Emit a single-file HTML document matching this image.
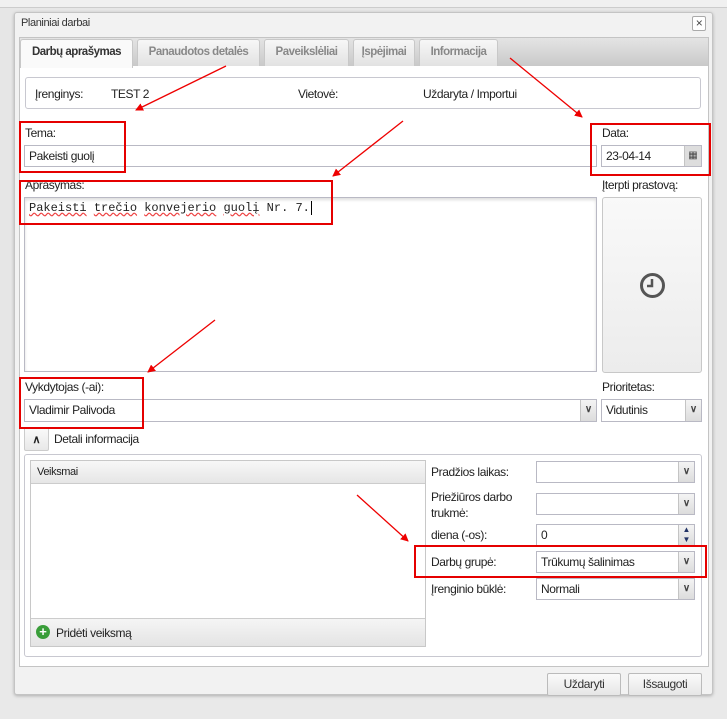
<!DOCTYPE html>
<html><head><meta charset="utf-8"><style>
*{box-sizing:border-box;margin:0;padding:0}
body{width:727px;height:719px;background:#e6e6e6;font-family:"Liberation Sans",sans-serif;font-size:12px;letter-spacing:-0.4px;color:#222;position:relative;overflow:hidden}
.a{position:absolute;white-space:nowrap}
.inp{position:absolute;background:#fff;border:1px solid #b9b9c4;height:22px;padding:3px 4px;font-size:12px;white-space:nowrap}
.dd{position:absolute;right:0;top:0;width:16px;height:100%;background:linear-gradient(#f4f4f4,#dcdcdc);border-left:1px solid #c4c4c4;font-size:10px;font-weight:bold;text-align:center;line-height:20px;color:#444;letter-spacing:0}
.rb{position:absolute;border:2px solid #e50000}
.tab{position:absolute;top:39px;height:27px;border:1px solid #c8c8c8;border-bottom:none;background:linear-gradient(#f7f7f7,#e2e2e2);color:#888;font-weight:bold;font-size:11.5px;letter-spacing:-0.5px;padding-top:6px;text-align:center;border-radius:3px 3px 0 0}
.btn{position:absolute;height:23px;border:1px solid #bbb;border-radius:2px;background:linear-gradient(#fafafa,#e6e6e6);text-align:center;line-height:21px;font-size:12px;color:#333}
</style></head><body>
<div class="a" style="left:0;top:0;width:727px;height:8px;background:#f0f0f0;border-bottom:1px solid #ccc"></div>
<div class="a" style="left:0;top:570px;width:727px;height:149px;background:#e9e9e9"></div>
<div class="a" style="left:14px;top:12px;width:699px;height:683px;background:#f2f2f2;border:1px solid #c4c4c4;border-radius:3px;box-shadow:0 1px 3px rgba(0,0,0,.25)"></div>
<div class="a" style="left:21px;top:17px;font-size:11px;color:#333">Planiniai darbai</div>
<div class="a" style="left:692px;top:16px;width:14px;height:15px;border:1px solid #aaa;border-radius:2px;background:#fff;font-size:12px;text-align:center;line-height:13px;color:#444">×</div>
<div class="a" style="left:19px;top:37px;width:690px;height:30px;background:linear-gradient(#e4e4e4,#c9c9c9);border:1px solid #c4c4c4"></div>
<div class="a" style="left:19px;top:66px;width:690px;height:601px;background:#fff;border:1px solid #c4c4c4;border-top:none"></div>
<div class="tab" style="left:20px;width:113px;background:#fafafa;color:#333;height:29px">Darbų aprašymas</div>
<div class="tab" style="left:137px;width:123px">Panaudotos detalės</div>
<div class="tab" style="left:264px;width:85px">Paveikslėliai</div>
<div class="tab" style="left:353px;width:62px">Įspėjimai</div>
<div class="tab" style="left:419px;width:79px">Informacija</div>
<div class="a" style="left:25px;top:77px;width:676px;height:32px;border:1px solid #c8c8d0;border-radius:3px"></div>
<div class="a" style="left:35px;top:87px">Įrenginys:</div>
<div class="a" style="left:111px;top:87px">TEST 2</div>
<div class="a" style="left:298px;top:87px">Vietovė:</div>
<div class="a" style="left:423px;top:87px">Uždaryta / Importui</div>
<div class="a" style="left:25px;top:126px">Tema:</div>
<div class="inp" style="left:24px;top:145px;width:573px">Pakeisti guolį</div>
<div class="a" style="left:602px;top:126px">Data:</div>
<div class="inp" style="left:601px;top:145px;width:101px">23-04-14<div class="dd" style="width:17px;background:#ddd;font-weight:normal">▦</div></div>
<div class="a" style="left:25px;top:178px">Aprašymas:</div>
<div class="inp" style="left:24px;top:197px;width:573px;height:175px;padding:3px 4px;font-family:'Liberation Mono',monospace;font-size:12px;letter-spacing:0;box-shadow:inset 0 2px 3px #ddd"><span style="text-decoration:underline wavy #e44">Pakeisti</span> <span style="text-decoration:underline wavy #e44">trečio</span> <span style="text-decoration:underline wavy #e44">konvejerio</span> <span style="text-decoration:underline wavy #e44">guolį</span> Nr. 7.<span style="border-left:1px solid #000;margin-left:1px"></span></div>
<div class="a" style="left:602px;top:178px">Įterpti prastovą:</div>
<div class="a" style="left:602px;top:197px;width:100px;height:176px;border:1px solid #c8c8c8;border-radius:3px;background:linear-gradient(#f9f9f9,#ececec)"></div>
<svg class="a" style="left:639px;top:272px" width="27" height="27"><circle cx="13.5" cy="13.5" r="11" fill="none" stroke="#555" stroke-width="3"/><path d="M13 7v7h-5" fill="none" stroke="#555" stroke-width="2.5"/></svg>
<div class="a" style="left:25px;top:380px">Vykdytojas (-ai):</div>
<div class="inp" style="left:24px;top:399px;width:573px;height:23px">Vladimir Palivoda<div class="dd">∨</div></div>
<div class="a" style="left:602px;top:380px">Prioritetas:</div>
<div class="inp" style="left:601px;top:399px;width:101px;height:23px">Vidutinis<div class="dd">∨</div></div>
<div class="a" style="left:24px;top:427px;width:25px;height:24px;border:1px solid #ccc;border-radius:2px;background:linear-gradient(#fafafa,#e8e8e8);text-align:center;font-size:11px;line-height:24px;font-weight:bold;letter-spacing:0">∧</div>
<div class="a" style="left:54px;top:432px">Detali informacija</div>
<div class="a" style="left:24px;top:454px;width:678px;height:203px;border:1px solid #c8c8d0;border-radius:3px"></div>
<div class="a" style="left:30px;top:460px;width:396px;height:187px;border:1px solid #c8c8c8"></div>
<div class="a" style="left:31px;top:461px;width:394px;height:23px;background:linear-gradient(#f7f7f7,#e6e6e6);border-bottom:1px solid #ccc;font-size:11px;padding:5px 6px">Veiksmai</div>
<div class="a" style="left:31px;top:618px;width:394px;height:28px;background:linear-gradient(#f5f5f5,#e4e4e4);border-top:1px solid #ccc"></div>
<div class="a" style="left:36px;top:625px;width:14px;height:14px;border-radius:50%;background:#3a9e3a;color:#fff;font-weight:bold;text-align:center;line-height:14px;font-size:13px;letter-spacing:0">+</div>
<div class="a" style="left:56px;top:626px">Pridėti veiksmą</div>
<div class="a" style="left:431px;top:465px">Pradžios laikas:</div>
<div class="inp" style="left:536px;top:461px;width:159px;height:22px"><div class="dd">∨</div></div>
<div class="a" style="left:431px;top:489px;line-height:16px">Priežiūros darbo<br>trukmė:</div>
<div class="inp" style="left:536px;top:493px;width:159px;height:22px"><div class="dd">∨</div></div>
<div class="a" style="left:431px;top:528px">diena (-os):</div>
<div class="inp" style="left:536px;top:524px;width:159px;height:22px">0<div class="dd" style="font-size:8px;line-height:10px;color:#236">▲<br>▼</div></div>
<div class="a" style="left:431px;top:555px">Darbų grupė:</div>
<div class="inp" style="left:536px;top:551px;width:159px;height:22px">Trūkumų šalinimas<div class="dd">∨</div></div>
<div class="a" style="left:431px;top:582px">Įrenginio būklė:</div>
<div class="inp" style="left:536px;top:578px;width:159px;height:22px">Normali<div class="dd">∨</div></div>
<div class="btn" style="left:547px;top:673px;width:74px">Uždaryti</div>
<div class="btn" style="left:628px;top:673px;width:74px">Išsaugoti</div>
<div class="rb" style="left:19px;top:121px;width:107px;height:52px"></div>
<div class="rb" style="left:590px;top:123px;width:121px;height:53px"></div>
<div class="rb" style="left:19px;top:180px;width:314px;height:45px"></div>
<div class="rb" style="left:19px;top:377px;width:125px;height:52px"></div>
<div class="rb" style="left:414px;top:545px;width:293px;height:33px"></div>
<svg class="a" style="left:0;top:0" width="727" height="719">
<defs><marker id="m" markerWidth="8" markerHeight="8" refX="7" refY="4" orient="auto" markerUnits="userSpaceOnUse"><path d="M0,0L8,4L0,8z" fill="#e00"/></marker></defs>
<g stroke="#e00" stroke-width="1.3" marker-end="url(#m)">
<line x1="226" y1="66" x2="136" y2="110"/>
<line x1="403" y1="121" x2="333" y2="176"/>
<line x1="510" y1="58" x2="582" y2="117"/>
<line x1="215" y1="320" x2="148" y2="372"/>
<line x1="357" y1="495" x2="408" y2="541"/>
</g></svg>
</body></html>
